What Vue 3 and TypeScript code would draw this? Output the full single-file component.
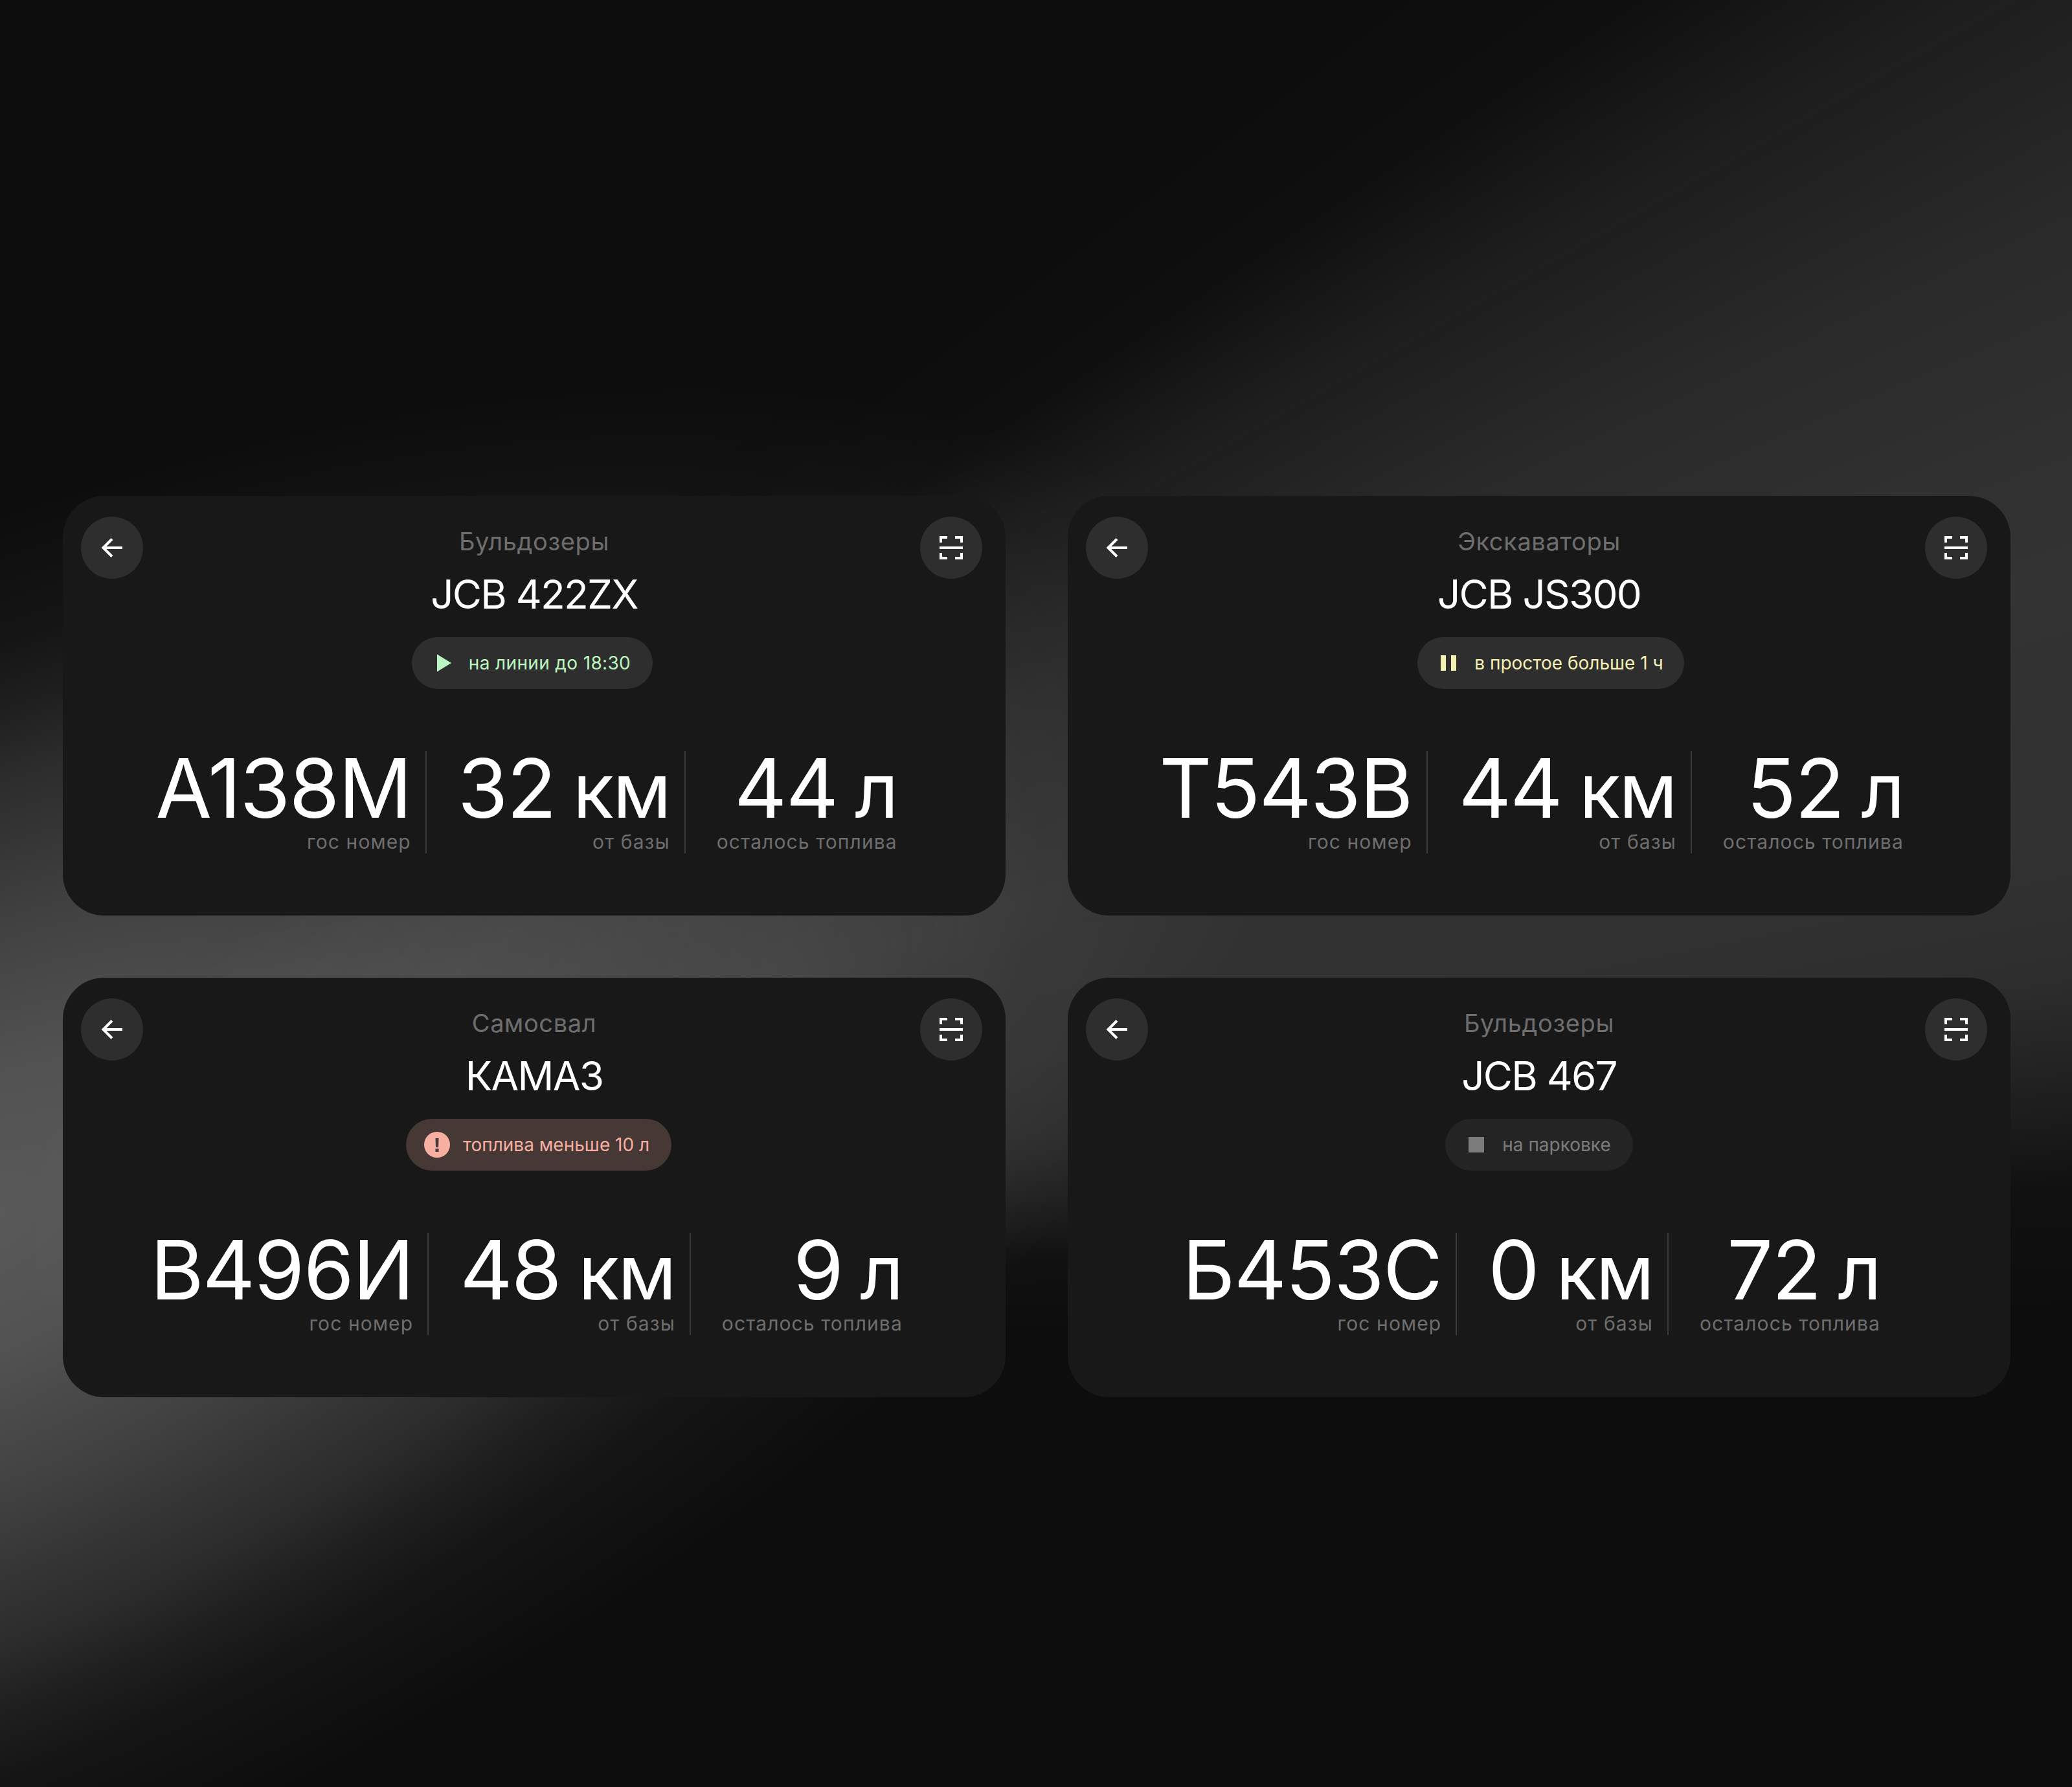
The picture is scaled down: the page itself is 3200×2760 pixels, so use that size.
<script setup lang="ts">
interface Stat { value: string; unit?: string; label: string }
interface Card { kind: string; name: string; status: string; tone: 'run' | 'idle' | 'low' | 'park'; stats: Stat[] }
const cards: Card[] = [
  { kind: 'Бульдозеры', name: 'JCB 422ZX', status: 'на линии до 18:30', tone: 'run', stats: [
    { value: 'А138М', label: 'гос номер' }, { value: '32', unit: 'км', label: 'от базы' }, { value: '44', unit: 'л', label: 'осталось топлива' } ] },
  { kind: 'Экскаваторы', name: 'JCB JS300', status: 'в простое больше 1 ч', tone: 'idle', stats: [
    { value: 'Т543В', label: 'гос номер' }, { value: '44', unit: 'км', label: 'от базы' }, { value: '52', unit: 'л', label: 'осталось топлива' } ] },
  { kind: 'Самосвал', name: 'КАМАЗ', status: 'топлива меньше 10 л', tone: 'low', stats: [
    { value: 'В496И', label: 'гос номер' }, { value: '48', unit: 'км', label: 'от базы' }, { value: '9', unit: 'л', label: 'осталось топлива' } ] },
  { kind: 'Бульдозеры', name: 'JCB 467', status: 'на парковке', tone: 'park', stats: [
    { value: 'Б453С', label: 'гос номер' }, { value: '0', unit: 'км', label: 'от базы' }, { value: '72', unit: 'л', label: 'осталось топлива' } ] },
]
</script>

<template>
  <main class="page">
    <section v-for="card in cards" :key="card.name" class="card">
      <button class="round back" aria-label="Назад">
        <svg width="36" height="36" viewBox="0 0 36 36" fill="none" stroke="#fff" stroke-width="4">
          <path d="M34 18H4" /><path d="M18 4.500L4.500 18 18 31.500" />
        </svg>
      </button>
      <button class="round scan" aria-label="Сканировать">
        <svg width="36" height="36" viewBox="0 0 36 36" fill="none" stroke="#fff" stroke-width="4">
          <path d="M2 10V2h10M24 2h10v8M0 18h36M2 26v8h10M24 34h10v-8" />
        </svg>
      </button>
      <div class="kind">{{ card.kind }}</div>
      <div class="name">{{ card.name }}</div>
      <div class="status" :class="card.tone">
        <svg v-if="card.tone === 'run'" class="glyph" viewBox="0 0 24 24"><path d="M3 -1.500L25 12 3 25.500z" fill="currentColor" /></svg>
        <svg v-else-if="card.tone === 'idle'" class="glyph" viewBox="0 0 24 24"><path d="M0 0h8v24H0zM16 0h8v24h-8z" fill="currentColor" /></svg>
        <svg v-else-if="card.tone === 'low'" class="glyph big" viewBox="0 0 40 40"><circle cx="20" cy="20" r="20" fill="currentColor" /><path d="M17.500 10h5l-.5 14h-4zM17.500 26h5v5h-5z" fill="#463835" /></svg>
        <svg v-else class="glyph" viewBox="0 0 24 24"><path d="M0 0h24v24H0z" fill="currentColor" /></svg>
        <span>{{ card.status }}</span>
      </div>
      <div class="stats">
        <div v-for="s in card.stats" :key="s.label" class="stat">
          <div class="value">{{ s.value }}<span v-if="s.unit" class="unit">{{ s.unit }}</span></div>
          <div class="label">{{ s.label }}</div>
        </div>
      </div>
    </section>
  </main>
</template>

<style scoped>
.page {
  position: relative;
  overflow: hidden;
  width: 3200px;
  height: 2760px;
  box-sizing: border-box;
  padding: 766px 95px 0 97px;
  display: grid;
  grid-template-columns: 1456px 1456px;
  grid-auto-rows: 648px;
  column-gap: 96px;
  row-gap: 96px;
  font-family: Inter, "Noto Sans", sans-serif;
  background: #0d0d0d;
}
.page::before {
  content: "";
  position: absolute;
  left: -2250px;
  top: 890px;
  width: 4400px;
  height: 2000px;
  transform: rotate(-25deg);
  background: radial-gradient(closest-side,
    rgba(255,255,255,.318) 0%,
    rgba(255,255,255,.285) 20%,
    rgba(255,255,255,.212) 42%,
    rgba(255,255,255,.17) 52%,
    rgba(255,255,255,.125) 63%,
    rgba(255,255,255,.08) 71%,
    rgba(255,255,255,.035) 81%,
    rgba(255,255,255,0) 100%);
}
.page::after {
  content: "";
  position: absolute;
  inset: 0;
  background: conic-gradient(from 0deg at -600px 2100px,
    rgba(255,255,255,0) 0deg,
    rgba(255,255,255,0) 50deg,
    rgba(255,255,255,.012) 56deg,
    rgba(255,255,255,.07) 60deg,
    rgba(255,255,255,.12) 65deg,
    rgba(255,255,255,.16) 72deg,
    rgba(255,255,255,.153) 78deg,
    rgba(255,255,255,.136) 81deg,
    rgba(255,255,255,.087) 83.5deg,
    rgba(255,255,255,.02) 86deg,
    rgba(255,255,255,.004) 89deg,
    rgba(255,255,255,0) 91deg,
    rgba(255,255,255,0) 360deg);
  -webkit-mask-image: linear-gradient(90deg, transparent 0, #000 1500px);
  mask-image: linear-gradient(90deg, transparent 0, #000 1500px);
}
.card {
  position: relative;
  z-index: 1;
  background: #181818;
  border-radius: 64px;
  display: flex;
  flex-direction: column;
  align-items: center;
  padding-top: 46px;
  box-sizing: border-box;
}
.round {
  position: absolute;
  top: 32px;
  width: 96px;
  height: 96px;
  border: 0;
  border-radius: 50%;
  background: #2e2e2e;
  padding: 0;
  display: flex;
  align-items: center;
  justify-content: center;
}
.back { left: 28px; }
.scan { right: 36px; }
.kind {
  font-size: 38px;
  line-height: 48px;
  color: #6e6e6e;
  letter-spacing: 0.6px;
}
.name {
  margin-top: 20px;
  font-size: 62px;
  line-height: 76px;
  color: #fff;
  font-weight: 370;
  letter-spacing: -1.8px;
}
.status {
  margin-top: 28px;
  height: 80px;
  padding: 0 34px 0 36px;
  border-radius: 40px;
  background: #2e2e2e;
  display: flex;
  align-items: center;
  gap: 28px;
  font-size: 28px;
}
.glyph { width: 24px; height: 24px; overflow: visible; }
.glyph.big { width: 40px; height: 40px; margin-left: -8px; margin-right: -8px; }
.run { color: #bdf5c0; letter-spacing: 0.35px; margin-right: 6px; }
.idle { color: #f6efb4; margin-left: 36px; padding-right: 32px; }
.low { color: #f7afa2; background: #463835; margin-left: 14px; }
.park { color: #7c7c7c; background: #242424; }
.stats {
  margin-top: 96px;
  display: flex;
  height: 158px;
}
.stat {
  text-align: right;
  padding-right: 22px;
  border-right: 2px solid #3a3a3a;
  padding-left: 48px;
}
.stat:first-child { padding-left: 0; }
.stat:last-child { border-right: 0; padding-right: 24px; }
.value {
  font-size: 126px;
  line-height: 114px;
  height: 114px;
  color: #fff;
  font-weight: 370;
  letter-spacing: -1.8px;
  white-space: nowrap;
}
.unit { font-size: 117px; line-height: 0; margin-left: 27px; }
.label {
  margin-top: 8px;
  font-size: 30px;
  line-height: 36px;
  color: #6e6e6e;
  letter-spacing: 1.1px;
  white-space: nowrap;
}
</style>

<style>
html, body { margin: 0; background: #0d0d0d; }
</style>
